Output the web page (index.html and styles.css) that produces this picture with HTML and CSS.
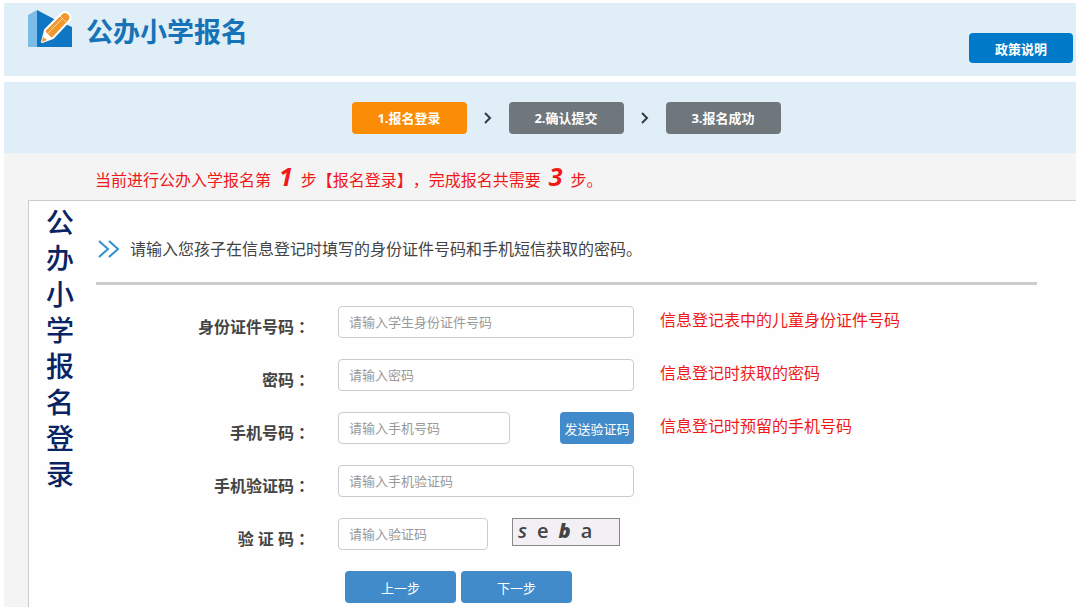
FILE: index.html
```
<!DOCTYPE html>
<html lang="zh-CN">
<head>
    <meta charset="UTF-8">
    <meta name="viewport" content="width=device-width, initial-scale=1.0">
    <title>公办小学报名</title>
    <link rel="stylesheet" href="styles.css">
</head>
<body>
    <header class="header">
        <svg class="logo" width="44" height="38" viewBox="0 0 44 38" aria-hidden="true">
            <path d="M0 5L9 0V37H0Z" fill="#7cbce8"/>
            <path d="M9 0L26 9L44 17V37H9Z" fill="#0f76c4"/>
            <path d="M14 32L17 20L33 4Q37 0 41 4Q44 8 41 11L25 28Z" fill="#f0972e" stroke="#fff" stroke-width="2" stroke-linejoin="round"/>
            <path d="M14 32L17 21L24 28Z" fill="#fff"/>
            <path d="M14 32L15 27L19 30Z" fill="#f0972e"/>
            <path d="M32 6L39 13M20 23L34 9" stroke="#fbd9a8" stroke-width="1" fill="none"/>
        </svg>
        <h1>公办小学报名</h1>
        <button type="button" class="policy">政策说明</button>
    </header>

    <nav class="steps">
        <span class="step active">1.报名登录</span>
        <svg class="arrow" width="8" height="12" viewBox="0 0 8 12"><path d="M1 1L6 6L1 11"/></svg>
        <span class="step">2.确认提交</span>
        <svg class="arrow" width="8" height="12" viewBox="0 0 8 12"><path d="M1 1L6 6L1 11"/></svg>
        <span class="step">3.报名成功</span>
    </nav>

    <div class="wrapper">
        <p class="notice">当前进行公办入学报名第<em>1</em>步【报名登录】，完成报名共需要<em>3</em>步。</p>

        <div class="content">
            <h2 class="side-title">公办小学报名登录</h2>

            <main class="main">
                <div class="tip">
                    <svg width="22" height="18" viewBox="0 0 22 18"><path d="M1 1L10 9L1 17M11 1L20 9L11 17"/></svg>
                    <p>请输入您孩子在信息登记时填写的身份证件号码和手机短信获取的密码。</p>
                </div>

                <form class="form">
                    <div class="row">
                        <label for="idNumber">身份证件号码<span class="colon" lang="zh-TW">：</span></label>
                        <div class="field">
                            <input type="text" id="idNumber" placeholder="请输入学生身份证件号码">
                        </div>
                        <p class="hint">信息登记表中的儿童身份证件号码</p>
                    </div>
                    <div class="row">
                        <label for="password">密码<span class="colon" lang="zh-TW">：</span></label>
                        <div class="field">
                            <input type="password" id="password" placeholder="请输入密码">
                        </div>
                        <p class="hint">信息登记时获取的密码</p>
                    </div>
                    <div class="row">
                        <label for="phone">手机号码<span class="colon" lang="zh-TW">：</span></label>
                        <div class="field between">
                            <input type="text" id="phone" class="medium" placeholder="请输入手机号码">
                            <button type="button" class="btn send">发送验证码</button>
                        </div>
                        <p class="hint">信息登记时预留的手机号码</p>
                    </div>
                    <div class="row">
                        <label for="smsCode">手机验证码<span class="colon" lang="zh-TW">：</span></label>
                        <div class="field">
                            <input type="text" id="smsCode" placeholder="请输入手机验证码">
                        </div>
                    </div>
                    <div class="row">
                        <label for="captcha">验 证 码<span class="colon" lang="zh-TW">：</span></label>
                        <div class="field">
                            <input type="text" id="captcha" class="short" placeholder="请输入验证码">
                            <div class="captcha"><i>s</i><span>e</span><b>b</b><span>a</span></div>
                        </div>
                    </div>
                    <div class="actions">
                        <button type="button" class="btn">上一步</button>
                        <button type="button" class="btn">下一步</button>
                    </div>
                </form>
            </main>
        </div>
    </div>
</body>
</html>
```
FILE: styles.css
```
* {
    box-sizing: border-box;
}
body {
    margin: 0;
    padding: 3px 4px 0;
    font-family: "Open Sans", "Noto Sans CJK SC", sans-serif;
    font-size: 16px;
    line-height: 24px;
    text-spacing-trim: space-all;
    color: #444;
    background-color: #fff;
}
h1, h2, p {
    margin: 0;
}
button, input {
    font-family: inherit;
    font-size: 13px;
}
button {
    border: none;
    border-radius: 4px;
    color: white;
    cursor: pointer;
}
.header {
    display: flex;
    align-items: flex-start;
    height: 73px;
    padding: 7px 3px 0 24px;
    background-color: #e0eef7;
}
.header h1 {
    margin-left: 14px;
    padding-top: 4px;
    font-size: 27px;
    line-height: 36px;
    color: #1673b8;
}
.policy {
    width: 104px;
    height: 30px;
    margin: 23px 0 0 auto;
    font-weight: bold;
    background-color: #007ac8;
}
.steps {
    display: flex;
    justify-content: center;
    align-items: center;
    gap: 17px;
    height: 71px;
    margin-top: 6px;
    padding-left: 52px;
    background-color: #e0eef7;
}
.step {
    width: 115px;
    border-radius: 4px;
    font-size: 13px;
    font-weight: bold;
    line-height: 32px;
    text-align: center;
    color: white;
    background-color: #6f777d;
}
.step.active {
    background-color: #fb8c05;
}
.arrow path {
    fill: none;
    stroke: #333c44;
    stroke-width: 2;
}
.wrapper {
    padding-left: 24px;
    background-color: #f5f4f4;
}
.notice {
    height: 47px;
    padding: 11px 0 0 67px;
    color: #f01818;
}
.notice em {
    margin: 0 8px;
    font-size: 25px;
    font-weight: bold;
    line-height: 24px;
}
.content {
    display: flex;
    border-top: 1px solid #ccc;
    border-left: 1px solid #ccc;
    background-color: #fefefe;
}
.side-title {
    width: 67px;
    padding: 3px 20px 0 17px;
    font-size: 28px;
    line-height: 36px;
    font-weight: 500;
    color: #0a2463;
}
.main {
    flex: 1;
    padding-right: 39px;
}
.tip {
    display: flex;
    align-items: center;
    gap: 10px;
    height: 84px;
    padding: 15px 0 0 2px;
    border-bottom: 3px solid #ccc;
}
.tip path {
    fill: none;
    stroke: #2f8fd0;
    stroke-width: 2;
}
.form {
    padding: 21px 0 4px;
}
.row {
    display: grid;
    grid-template-columns: 214px 296px 1fr;
    height: 32px;
    margin-bottom: 21px;
}
.row label {
    padding-top: 8px;
    font-weight: bold;
    text-align: right;
}
.colon {
    font-family: "Noto Sans CJK TC", sans-serif;
}
.field {
    display: flex;
    align-items: flex-start;
    width: 296px;
    margin-left: 28px;
}
.between {
    justify-content: space-between;
}
.field input {
    width: 100%;
    height: 32px;
    padding: 0 10px;
    border: 1px solid #ccc;
    border-radius: 4px;
    background-color: white;
}
.field input.medium {
    width: 172px;
}
.field input.short {
    width: 150px;
}
.field input::placeholder {
    color: #999;
}
.hint {
    margin-left: 54px;
    padding-top: 2px;
    color: #f01818;
}
.btn {
    width: 111px;
    height: 32px;
    padding: 0;
    background-color: #428bca;
}
.btn.send {
    width: 74px;
}
.captcha {
    display: flex;
    gap: 10px;
    width: 108px;
    height: 28px;
    margin-left: 24px;
    padding-left: 5px;
    border: 1px solid #888;
    font-size: 20px;
    font-weight: 600;
    background-color: #f3f0f5;
}
.captcha b {
    font-style: italic;
}
.actions {
    display: flex;
    gap: 5px;
    padding-left: 249px;
}
```
